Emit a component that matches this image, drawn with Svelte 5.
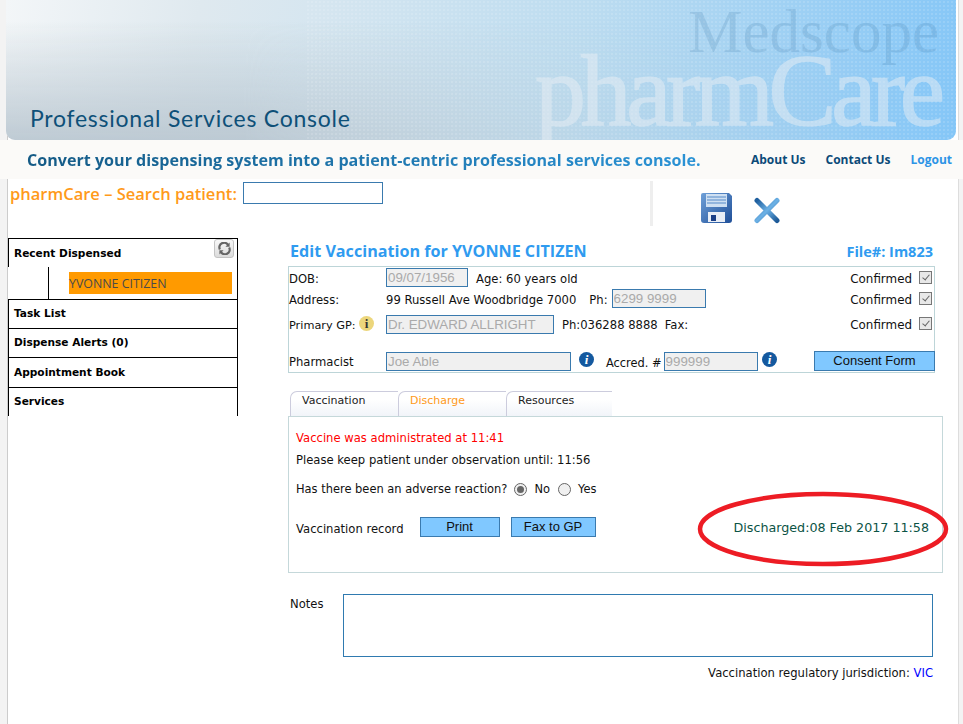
<script>
  const sideItems = ['Task List', 'Dispense Alerts (0)', 'Appointment Book', 'Services'];
  const tabs = ['Vaccination', 'Discharge', 'Resources'];
</script>

<div class="shell">
  <header class="banner">
    <span class="brand-top">Medscope</span>
    <span class="brand-main">pharmCare</span>
    <div class="console">Professional Services Console</div>
  </header>

  <div class="tagline">
    <span class="slogan">Convert your dispensing system into a patient-centric professional services console.</span>
    <nav class="links">
      <a href="#about">About Us</a>
      <a href="#contact">Contact Us</a>
      <a class="logout" href="#logout">Logout</a>
    </nav>
  </div>

  <div class="toprow">
    <div class="search">
      <label for="q">pharmCare – Search patient:</label>
      <input id="q" type="text" />
    </div>
    <div class="tools">
      <svg class="save" width="31" height="30" viewBox="0 0 31 30">
        <defs>
          <linearGradient id="fl" x1="0" y1="0" x2="1" y2="1">
            <stop offset="0" stop-color="#6fa0d8" />
            <stop offset="1" stop-color="#1f4f98" />
          </linearGradient>
        </defs>
        <path d="M2 0H28L31 3V27Q31 30 28 30H3Q0 30 0 27V2Q0 0 2 0Z" fill="url(#fl)" />
        <rect x="5" y="1" width="21" height="13" fill="#cfe0f2" />
        <path d="M6 4H25M6 7H25M6 10H25" stroke="#7fa6d6" stroke-width="1.4" />
        <rect x="7" y="19" width="17" height="10" fill="#e9eef6" />
        <rect x="10" y="22" width="5" height="6" fill="#1b3f86" />
      </svg>
      <svg class="close" width="28" height="27" viewBox="0 0 28 27">
        <defs>
          <linearGradient id="xg" x1="0" y1="0" x2="1" y2="1">
            <stop offset="0" stop-color="#1f5f9e" />
            <stop offset="0.5" stop-color="#6db2e6" />
            <stop offset="1" stop-color="#1d5a98" />
          </linearGradient>
        </defs>
        <path d="M4 3.500L24 23.500M24 3.500L4 23.500" stroke="url(#xg)" stroke-width="5" stroke-linecap="round" />
      </svg>
    </div>
  </div>

  <div class="body">
    <aside class="side">
      <div class="side-head">
        Recent Dispensed
        <button class="refresh" aria-label="Refresh">
          <svg width="13" height="13" viewBox="0 0 14 14" fill="none" stroke="#666" stroke-width="2.400">
            <path d="M2 8A5 5 0 0 1 11 3.500" />
            <path d="M12 6A5 5 0 0 1 3 10.500" />
            <path d="M12.500 0.500V5H8" fill="#666" stroke="none" />
            <path d="M1.500 13.500V9H6" fill="#666" stroke="none" />
          </svg>
        </button>
      </div>
      <div class="side-sub">
        <div class="patient">YVONNE CITIZEN</div>
      </div>
      {#each sideItems as item}
        <div class="side-item">{item}</div>
      {/each}
    </aside>

    <main class="content">
      <div class="title-row">
        <h1>Edit Vaccination for YVONNE CITIZEN</h1>
        <span class="file">File#: Im823</span>
      </div>

      <section class="patient-box">
        <div class="row r1">
          <span class="lbl up">DOB:</span>
          <input class="w82" readonly value="09/07/1956" />
          <span class="txt age">Age: 60 years old</span>
          <span class="txt conf">Confirmed <i class="check"></i></span>
        </div>
        <div class="row r2">
          <span class="lbl">Address:</span>
          <span class="txt">99 Russell Ave Woodbridge 7000</span>
          <span class="txt ph">Ph:</span>
          <input class="w94" readonly value="6299 9999" />
          <span class="txt conf">Confirmed <i class="check"></i></span>
        </div>
        <div class="row r3">
          <span class="lbl gp">Primary GP:
            <svg width="15" height="15" viewBox="0 0 15 15">
              <circle cx="7.500" cy="7.500" r="7.500" fill="#ecd67c" />
              <text x="7.500" y="12" text-anchor="middle" class="i-mark">i</text>
            </svg>
          </span>
          <input class="w168" readonly value="Dr. EDWARD ALLRIGHT" />
          <span class="txt phone">Ph:036288 8888</span>
          <span class="txt fax">Fax:</span>
          <span class="txt conf">Confirmed <i class="check"></i></span>
        </div>
        <div class="row r4">
          <span class="lbl">Pharmacist</span>
          <input class="w185" readonly value="Joe Able" />
          <svg class="info" width="15" height="15" viewBox="0 0 15 15">
            <circle cx="7.500" cy="7.500" r="7.500" fill="#14599f" />
            <text x="7.500" y="12" text-anchor="middle" class="i-white">i</text>
          </svg>
          <span class="accred">Accred. #</span>
          <input class="w94 acc" readonly value="999999" />
          <svg class="info" width="15" height="15" viewBox="0 0 15 15">
            <circle cx="7.500" cy="7.500" r="7.500" fill="#14599f" />
            <text x="7.500" y="12" text-anchor="middle" class="i-white">i</text>
          </svg>
          <button class="btn consent">Consent Form</button>
        </div>
      </section>

      <div class="tabs">
        {#each tabs as tab, i}
          <div class="tab" class:active={i === 1}>{tab}</div>
        {/each}
      </div>

      <section class="panel">
        <p class="red">Vaccine was administrated at 11:41</p>
        <p class="observe">Please keep patient under observation until: 11:56</p>
        <div class="adverse">
          Has there been an adverse reaction?
          <i class="radio on"></i><span>No</span>
          <i class="radio"></i><span>Yes</span>
        </div>
        <div class="record">
          <span class="rec-label">Vaccination record</span>
          <button class="btn print">Print</button>
          <button class="btn fax-btn">Fax to GP</button>
          <span class="discharged">Discharged:08 Feb 2017 11:58</span>
        </div>
        <svg class="ring" width="256" height="80" viewBox="0 0 256 80">
          <ellipse cx="128" cy="40" rx="123" ry="35" fill="none" stroke="#ed1c24" stroke-width="4.500" />
        </svg>
      </section>

      <div class="notes">
        <span>Notes</span>
        <div class="notes-box"></div>
      </div>

      <div class="jurisdiction">Vaccination regulatory jurisdiction: <span>VIC</span></div>
    </main>
  </div>
</div>

<style>
  :global(body) {
    background: #fff;
  }

  .shell {
    width: 963px;
    height: 724px;
    overflow: hidden;
    box-sizing: border-box;
    font-family: "DejaVu Sans", Verdana, sans-serif;
    font-size: 11.6px;
    color: #111;
    background: linear-gradient(to right, #f3f3f3 0 7px, #ccc 7px 8px, #fff 8px 958px, #ddd 958px 959px, #f3f3f3 959px);
  }

  .banner {
    position: relative;
    height: 140px;
    margin: 0 7px 0 6px;
    overflow: hidden;
    border-radius: 0 0 9px 9px;
    background: linear-gradient(100deg, #f3f6f8 0%, #dfe9ef 20%, #d6e6f0 32%, #bcdcf0 60%, #84c6f7 100%);
  }

  .banner::before {
    content: '';
    position: absolute;
    inset: 0;
    background: linear-gradient(to bottom, rgba(255, 255, 255, 0) 15%, rgba(185, 198, 208, 0.9) 100%);
    -webkit-mask-image: linear-gradient(to right, #000 25%, rgba(0, 0, 0, 0.25) 60%, transparent 95%);
    mask-image: linear-gradient(to right, #000 25%, rgba(0, 0, 0, 0.25) 60%, transparent 95%);
  }

  .banner::after {
    content: '';
    position: absolute;
    inset: 0 0 0 300px;
    background: radial-gradient(circle, rgba(255, 255, 255, 0.13) 1px, transparent 1.300px) 0 0 / 4px 4px;
  }

  .brand-top {
    position: absolute;
    right: 17px;
    top: 1px;
    font-family: "Liberation Serif", serif;
    font-size: 61px;
    line-height: 1;
    color: rgba(45, 105, 155, 0.16);
    z-index: 1;
  }

  .brand-main {
    position: absolute;
    left: 529px;
    top: 40px;
    font-family: "Liberation Serif", serif;
    font-size: 102px;
    letter-spacing: -5.400px;
    line-height: 1;
    color: #e8eef4;
    -webkit-text-stroke: 1.500px #e8eef4;
    opacity: 0.5;
    z-index: 1;
  }

  .console {
    position: absolute;
    left: 24px;
    top: 104px;
    font-family: Lato, sans-serif;
    font-size: 23px;
    letter-spacing: 0.75px;
    color: #0e5078;
    z-index: 1;
  }

  .tagline {
    display: flex;
    align-items: center;
    justify-content: space-between;
    height: 39px;
    padding: 0 11px 0 27px;
    background: #fbfaf8;
  }

  .slogan {
    font-family: "Open Sans", sans-serif;
    font-size: 16.1px;
    font-weight: 700;
    color: transparent;
    background: linear-gradient(to right, #145a85, #2b93d6);
    -webkit-background-clip: text;
    background-clip: text;
  }

  .links {
    display: flex;
    gap: 20px;
  }

  .links a {
    font-family: "Open Sans", sans-serif;
    font-size: 12px;
    font-weight: 700;
    color: #0b4a78;
    text-decoration: none;
  }

  .links a.logout {
    color: #2d94e6;
  }

  .toprow {
    display: flex;
    justify-content: space-between;
    height: 59px;
    padding-left: 10px;
  }

  .search {
    display: flex;
    align-items: flex-start;
    gap: 6px;
    padding-top: 3px;
  }

  .search label {
    font-family: "Open Sans", sans-serif;
    font-size: 16.5px;
    font-weight: 600;
    line-height: 24px;
    color: #ff9a1a;
  }

  .search input {
    width: 140px;
    height: 22px;
    box-sizing: border-box;
    border: 1px solid #3a7aae;
    background: #fff;
    outline: none;
  }

  .tools {
    display: flex;
    align-items: flex-start;
    width: 313px;
    height: 45px;
    margin-top: 2px;
    box-sizing: border-box;
    border-left: 3px solid #eee;
    padding-left: 48px;
  }

  .save {
    margin-top: 12px;
  }

  .close {
    margin: 16px 0 0 21px;
  }

  .body {
    display: flex;
    align-items: flex-start;
  }

  .side {
    width: 230px;
    margin-left: 8px;
    box-sizing: border-box;
    border-top: 1px solid #000;
    border-right: 1px solid #000;
    font-weight: 700;
    font-size: 10.6px;
    color: #000;
  }

  .side-head {
    position: relative;
    height: 28px;
    line-height: 28px;
    padding-left: 5px;
    border-left: 1px solid #000;
  }

  .refresh {
    position: absolute;
    right: 3px;
    top: 0;
    width: 20px;
    height: 19px;
    padding: 0;
    display: flex;
    align-items: center;
    justify-content: center;
    border: 1px solid #c4c4c4;
    border-radius: 3px;
    background: linear-gradient(#f8f8f8, #dcdcdc);
  }

  .side-sub {
    height: 32px;
    box-sizing: border-box;
    margin-left: 40px;
    padding: 5px 5px 0 20px;
    border-left: 1px solid #000;
  }

  .patient {
    height: 22px;
    line-height: 23px;
    background: #ff9a00;
    color: #4a4a4a;
    font-family: "Open Sans", sans-serif;
    font-size: 12.4px;
    font-weight: 400;
  }

  .side-item {
    height: 29px;
    line-height: 26px;
    box-sizing: border-box;
    padding-left: 5px;
    border-top: 1px solid #000;
    border-left: 1px solid #000;
  }

  .side-item:nth-last-child(2) {
    height: 30px;
    line-height: 28px;
  }

  .content {
    width: 655px;
    margin-left: 50px;
    position: relative;
  }

  .title-row {
    display: flex;
    align-items: center;
    justify-content: space-between;
    height: 28px;
    width: 645px;
    padding: 0 0 2px 2px;
    box-sizing: border-box;
  }

  h1 {
    margin: 0;
    font-family: "Open Sans", sans-serif;
    font-size: 16.15px;
    font-weight: 700;
    color: #2f9bf0;
  }

  .file {
    font-family: "Open Sans", sans-serif;
    font-size: 14.5px;
    font-weight: 700;
    color: #2f9bf0;
  }

  .patient-box {
    width: 647px;
    height: 107px;
    box-sizing: border-box;
    border: 1px solid #bdd5d8;
  }

  .row {
    display: flex;
    align-items: center;
  }

  .r1 { height: 21px; }
  .r2 { height: 21px; }
  .r3 { height: 30px; }
  .r4 { height: 33px; align-items: flex-end; padding-bottom: 1px; box-sizing: border-box; }

  .txt,
  .lbl {
    padding-top: 2px;
  }

  .lbl {
    width: 97px;
    flex: none;
    box-sizing: border-box;
  }

  .r4 .lbl {
    align-self: flex-end;
    padding-bottom: 2px;
  }

  .gp {
    display: flex;
    align-items: center;
    gap: 3px;
    font-size: 11.3px;
  }

  .gp svg {
    margin-top: -4px;
  }

  .i-mark {
    font-family: "Liberation Serif", serif;
    font-size: 13px;
    font-weight: 700;
    fill: #333;
  }

  .i-white {
    font-family: "Liberation Serif", serif;
    font-size: 13px;
    font-style: italic;
    font-weight: 700;
    fill: #fff;
  }

  input[readonly] {
    height: 19px;
    box-sizing: border-box;
    padding: 0 1px;
    border: 1px solid #3a7aae;
    background: #f0f0f0;
    color: #aaa;
    font-family: "Liberation Sans", Arial, sans-serif;
    font-size: 13.33px;
    outline: none;
  }

  .w82 { width: 82px; }
  .w94 { width: 94px; }
  .w168 { width: 168px; }
  .w185 { width: 185px; }

  .age {
    margin-left: 8px;
  }

  .ph {
    margin-left: 13px;
    margin-right: 4px;
  }

  .phone {
    margin-left: 8px;
  }

  .fax {
    margin-left: 7px;
  }

  .conf {
    display: flex;
    align-items: center;
    gap: 7px;
    margin-left: auto;
    margin-right: 2px;
    font-size: 11.9px;
  }

  .check {
    position: relative;
    display: block;
    width: 13px;
    height: 13px;
    box-sizing: border-box;
    border: 1px solid #777;
    background: #e8e8e8;
    margin-top: -3px;
  }

  .check::after {
    content: '';
    position: absolute;
    left: 3.500px;
    top: 1px;
    width: 3px;
    height: 6px;
    border: solid #666;
    border-width: 0 1.500px 1.500px 0;
    transform: rotate(40deg);
  }

  .info {
    margin: 0 0 4px 8px;
  }

  .acc + .info {
    margin-left: 4px;
  }

  .accred {
    margin-left: 12px;
    margin-right: 2px;
    margin-bottom: 1px;
    font-size: 11.4px;
  }

  .btn {
    height: 20px;
    box-sizing: border-box;
    padding: 0 0 2px;
    border: 1px solid #3a7aae;
    background: #80c8ff;
    color: #111;
    font-family: "Liberation Sans", Arial, sans-serif;
    font-size: 13px;
  }

  .consent {
    width: 121px;
    margin-left: auto;
    margin-right: -1px;
  }

  .tabs {
    display: flex;
    gap: 0;
    height: 25px;
    margin-top: 18px;
    padding-left: 2px;
  }

  .tab {
    width: 108px;
    box-sizing: border-box;
    padding: 2px 0 0 11px;
    border-left: 1px solid #ccd;
    border-top: 1px solid #ccd;
    border-radius: 7px 0 0 0;
    background: linear-gradient(#fff 30%, #f1f4f9);
    color: #222;
    font-size: 11px;
  }

  .tab:last-child {
    width: 106px;
  }

  .tab.active {
    color: #ff9a1a;
  }

  .panel {
    position: relative;
    width: 655px;
    height: 157px;
    box-sizing: border-box;
    border: 1px solid #c5d8da;
    padding: 14px 7px 0;
  }

  .panel p {
    margin: 0;
  }

  .red {
    color: #f00;
  }

  .observe {
    margin-top: 8px !important;
  }

  .adverse {
    display: flex;
    align-items: center;
    margin-top: 15px;
    font-size: 11.45px;
  }

  .radio {
    position: relative;
    display: block;
    width: 13px;
    height: 13px;
    margin: 0 7px;
    box-sizing: border-box;
    border: 1px solid #666;
    border-radius: 50%;
    background: #f0f0f0;
  }

  .radio.on::after {
    content: '';
    position: absolute;
    inset: 2px;
    border-radius: 50%;
    background: #666;
  }

  .radio + span {
    margin-right: 1px;
  }

  .record {
    display: flex;
    align-items: center;
    margin-top: 21px;
  }

  .rec-label {
    padding-top: 3px;
  }

  .print {
    width: 80px;
    margin-left: 16px;
  }

  .fax-btn {
    width: 85px;
    margin-left: 11px;
  }

  .discharged {
    margin-left: auto;
    margin-right: 6px;
    font-size: 12.7px;
    color: #0b5345;
  }

  .ring {
    position: absolute;
    right: -9px;
    top: 72px;
  }

  .notes {
    display: flex;
    margin-top: 21px;
    padding-left: 2px;
  }

  .notes span {
    width: 53px;
    padding-top: 3px;
  }

  .notes-box {
    width: 590px;
    height: 63px;
    box-sizing: border-box;
    border: 1px solid #2f7ab0;
  }

  .jurisdiction {
    width: 645px;
    margin-top: 9px;
    text-align: right;
  }

  .jurisdiction span {
    color: #00f;
  }
</style>
